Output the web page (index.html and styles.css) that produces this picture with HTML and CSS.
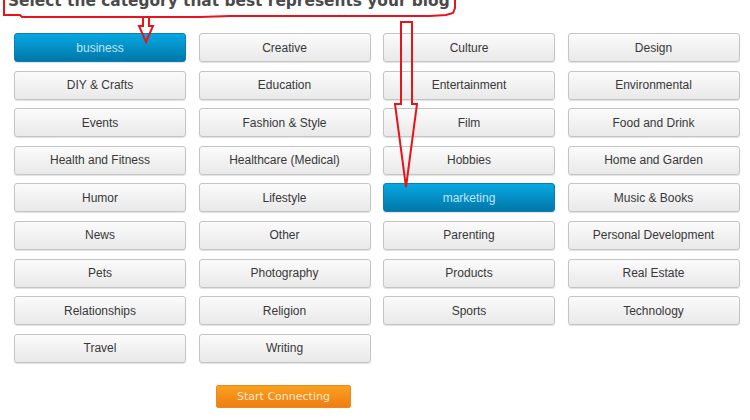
FILE: index.html
```html
<!DOCTYPE html>
<html lang="en">

<head>
    <meta charset="UTF-8">
    <meta name="viewport" content="width=device-width, initial-scale=1.0">
    <title>Choose Category</title>
    <link rel="stylesheet" href="styles.css">
</head>

<body>
    <div class="page">
        <h2 class="page-title">Select the category that best represents your blog</h2>
        <div class="category-grid">
            <button class="category-btn selected">business</button>
            <button class="category-btn">Creative</button>
            <button class="category-btn">Culture</button>
            <button class="category-btn">Design</button>
            <button class="category-btn">DIY &amp; Crafts</button>
            <button class="category-btn">Education</button>
            <button class="category-btn">Entertainment</button>
            <button class="category-btn">Environmental</button>
            <button class="category-btn">Events</button>
            <button class="category-btn">Fashion &amp; Style</button>
            <button class="category-btn">Film</button>
            <button class="category-btn">Food and Drink</button>
            <button class="category-btn">Health and Fitness</button>
            <button class="category-btn">Healthcare (Medical)</button>
            <button class="category-btn">Hobbies</button>
            <button class="category-btn">Home and Garden</button>
            <button class="category-btn">Humor</button>
            <button class="category-btn">Lifestyle</button>
            <button class="category-btn selected">marketing</button>
            <button class="category-btn">Music &amp; Books</button>
            <button class="category-btn">News</button>
            <button class="category-btn">Other</button>
            <button class="category-btn">Parenting</button>
            <button class="category-btn">Personal Development</button>
            <button class="category-btn">Pets</button>
            <button class="category-btn">Photography</button>
            <button class="category-btn">Products</button>
            <button class="category-btn">Real Estate</button>
            <button class="category-btn">Relationships</button>
            <button class="category-btn">Religion</button>
            <button class="category-btn">Sports</button>
            <button class="category-btn">Technology</button>
            <button class="category-btn">Travel</button>
            <button class="category-btn">Writing</button>
        </div>
        <div class="actions">
            <button class="start-btn">Start Connecting</button>
        </div>
    </div>

    <!-- red annotation drawn over the screenshot -->
    <svg class="annotation" width="750" height="420" viewBox="0 0 750 420">
        <g fill="none" stroke="#e8141c" stroke-width="2" stroke-linejoin="miter">
            <path d="M4 -2 L4 15 L20 15 L22 17 L200 17 L230 16 L430 16 L446 15 L453 13 L455 8 L455 -2" />
            <path d="M143 17 L143 26 L139 26 L146 42 L153 26 L149 26 L149 17" />
            <path d="M401 22 L412 22 L412 104 L417 104 L406 187 L395 104 L401 104 Z" />
        </g>
    </svg>
</body>

</html>
```

FILE: styles.css
```css
body {
    margin: 0;
    padding: 0;
    background: #fff;
    font-family: "Liberation Sans", Arial, sans-serif;
    overflow: hidden;
}

.page {
    padding: 0 0 0 14px;
}

.page-title {
    margin: -9px 0 0 -6px;
    height: 42px;
    font-family: "DejaVu Sans", Verdana, sans-serif;
    font-size: 15.4px;
    font-weight: bold;
    color: #4a4a4a;
    line-height: 20px;
}

.category-grid {
    display: grid;
    grid-template-columns: repeat(4, 172px);
    grid-auto-rows: 29px;
    column-gap: 12.5px;
    row-gap: 8.6px;
}

.category-btn {
    font-family: "Liberation Sans", Arial, sans-serif;
    font-size: 12px;
    color: #383838;
    background: linear-gradient(#fbfbfb, #e9e9e9);
    border: 1px solid #c4c4c4;
    border-radius: 3px;
    box-shadow: 0 1px 1px rgba(0, 0, 0, 0.12);
    padding: 0;
    cursor: pointer;
}

.category-btn.selected {
    color: #bfe4f4;
    background: linear-gradient(#07a8e2, #0077a9);
    border-color: #0a7fb0;
}

.actions {
    padding: 22px 0 0 202px;
}

.start-btn {
    width: 135px;
    height: 23px;
    font-family: "DejaVu Sans", Verdana, sans-serif;
    font-size: 11px;
    color: #fde9cf;
    background: linear-gradient(#f9a11f, #f07d14);
    border: 1px solid #e88a1d;
    border-radius: 2px;
    padding: 0;
    cursor: pointer;
}

.annotation {
    position: absolute;
    top: 0;
    left: 0;
    pointer-events: none;
}
```
